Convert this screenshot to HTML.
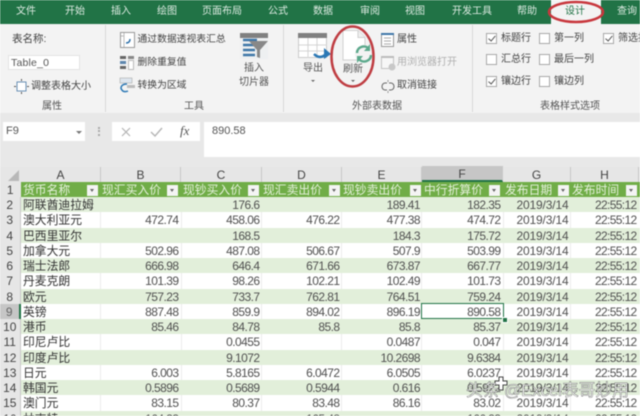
<!DOCTYPE html>
<html><head><meta charset="utf-8">
<style>
html,body{margin:0;padding:0;background:#fff}
#p{position:relative;width:640px;height:416px;overflow:hidden;background:#fff;font-family:"Liberation Sans","Noto Sans CJK SC",sans-serif;filter:blur(.45px)}
.a{position:absolute;white-space:nowrap}
.t{position:absolute;top:5px;height:14px;line-height:14px;font-size:10px;color:#dbe9e0;transform:translateX(-50%);white-space:nowrap}
.l{position:absolute;font-size:10px;line-height:14px;color:#444;white-space:nowrap}
.g{position:absolute;font-size:10px;line-height:14px;color:#555;white-space:nowrap;transform:translateX(-50%)}
.s{position:absolute;top:25px;width:1px;height:87px;background:#d8d8d8}
.cb{position:absolute;width:9px;height:9px;background:#fff;border:1px solid #a8a8a8}
.cb.on::after{content:"";position:absolute;left:3px;top:0;width:2.500px;height:6px;border:solid #555;border-width:0 1px 1px 0;transform:rotate(40deg)}
.ch{position:absolute;top:167px;height:15px;line-height:16px;background:#e6e6e6;font-size:12px;color:#444;text-align:center;border-right:1px solid #c8c8c8;box-sizing:border-box}
.r{position:absolute;left:0;width:640px;height:15.25px;line-height:17px;font-size:12px;letter-spacing:-.55px;color:#505050}
.r span{position:absolute;top:0;height:15.25px;text-align:right;box-sizing:border-box;white-space:nowrap;overflow:hidden}
.z{background:#e2efda}
.w{background:#fff}
.r .n{left:0;width:20.5px;background:#e6e6e6;text-align:center;border-right:1px solid #c8c8c8;font-size:12px;letter-spacing:0;color:#444}
.r .A{left:23px;width:77px;text-align:left;font-size:11.8px;letter-spacing:0;color:#333}
.r .B{left:100px;width:78.5px}
.r .C{left:180px;width:79.5px}
.r .D{left:261px;width:78.5px}
.r .E{left:341px;width:79px}
.r .F{left:421px;width:79.5px}
.r .G{left:503px;width:65.5px;letter-spacing:-.15px}
.r .H{left:570px;width:66.5px;letter-spacing:-.65px}
.w::after{content:"";position:absolute;left:100px;top:0;height:15.25px;width:1px;background:#ececec;box-shadow:81px 0 #ececec,161px 0 #ececec,241px 0 #ececec,321px 0 #ececec,403px 0 #ececec,470px 0 #ececec}
.h{position:absolute;top:182px;height:15px;line-height:17px;font-size:11.8px;color:#e6f1dd;background:#70ad47;white-space:nowrap;padding-left:2px;box-sizing:border-box;overflow:hidden}
.f{position:absolute;top:185px;width:11px;height:11px;background:#f4f4f4}
.f::after{content:"";position:absolute;left:3px;top:4px;border:2.500px solid transparent;border-top:3px solid #666;border-bottom:0}
</style></head><body>
<div id="p">
<div class="a" style="left:0;top:0;width:640px;height:24px;background:#217346"></div>
<div class="t" style="left:26px">文件</div><div class="t" style="left:75px">开始</div><div class="t" style="left:121px">插入</div><div class="t" style="left:167px">绘图</div><div class="t" style="left:222px">页面布局</div><div class="t" style="left:278px">公式</div><div class="t" style="left:323px">数据</div><div class="t" style="left:370px">审阅</div><div class="t" style="left:415px">视图</div><div class="t" style="left:472px">开发工具</div><div class="t" style="left:527px">帮助</div>
<div class="a" style="left:551px;top:0;width:50px;height:24px;background:#f3f3f3"></div>
<div class="t" style="left:575px;color:#217346">设计</div><div class="t" style="left:627px">查询</div>
<div class="a" style="left:0;top:24px;width:640px;height:89px;background:#f3f3f3"></div>
<div class="s" style="left:105px"></div><div class="s" style="left:283px"></div><div class="s" style="left:472px"></div>

<div class="l" style="left:12px;top:32px;font-size:10.5px">表名称:</div>
<div class="a" style="left:8px;top:55px;width:72px;height:15px;background:#fff;border:1px solid #e4e4e4;box-sizing:border-box;font-size:10.5px;line-height:14px;color:#555;padding-left:2px;letter-spacing:.2px">Table_0</div>
<svg class="a" style="left:13px;top:78px" width="17" height="17" viewBox="0 0 17 17"><rect x="4" y="4" width="9" height="9" fill="#fff" stroke="#6a8fb5"/><path d="M8.500 1v2M8.500 14v2M1 8.500h2M14 8.500h2" stroke="#555"/></svg>
<div class="l" style="left:31px;top:80px;font-size:10px">调整表格大小</div>
<div class="g" style="left:52px;top:100px">属性</div>

<svg class="a" style="left:120px;top:32px" width="15" height="16" viewBox="0 0 15 16"><rect x=".5" y=".5" width="14" height="15" fill="#fff" stroke="#9a9a9a"/><path d="M1 4h3M4 1v14" stroke="#bbb"/><path d="M6 11c3 0 4-2 4-4" fill="none" stroke="#2b6ea8" stroke-width="1.500"/></svg>
<div class="l" style="left:137.500px;top:33px;font-size:9.800px">通过数据透视表汇总</div>
<svg class="a" style="left:120px;top:56px" width="15" height="14" viewBox="0 0 15 14"><rect x="0" y="0" width="6" height="3" fill="#666"/><rect x="0" y="5" width="6" height="3" fill="#5c86ad"/><rect x="0" y="10" width="6" height="3" fill="#666"/><rect x="8" y="0" width="6" height="3" fill="#888"/><rect x="8.500" y="4.500" width="5" height="9" fill="#fff" stroke="#bbb"/></svg>
<div class="l" style="left:137.500px;top:56px;font-size:9.800px">删除重复值</div>
<svg class="a" style="left:119px;top:77px" width="17" height="17" viewBox="0 0 17 17"><rect x="1" y="1" width="12" height="5" fill="#dde5ee" stroke="#aaa" stroke-width=".6"/><rect x="8" y="8" width="8" height="3" fill="#bbb"/><path d="M8 7C2 7 1 11 3 13c1 2 4 2 6 1" fill="none" stroke="#2b78b5" stroke-width="1.500"/></svg>
<div class="l" style="left:137.500px;top:79px;font-size:9.800px">转换为区域</div>
<svg class="a" style="left:240px;top:33px" width="29" height="26" viewBox="0 0 29 26"><rect x="0" y="0" width="28" height="26" fill="#eef0f1"/><rect x="0" y="0" width="28" height="5" fill="#808080"/><path d="M3 7h14M3 12h12M3 17h12M3 22h12" stroke="#3f77a8" stroke-width="2.500"/><path d="M9 8h19l-8 9v8l-3-1v-7z" fill="#888"/></svg>
<div class="g" style="left:254px;top:62px">插入</div>
<div class="g" style="left:254px;top:76px">切片器</div>
<div class="g" style="left:194px;top:100px">工具</div>

<svg class="a" style="left:298px;top:33px" width="38" height="30" viewBox="0 0 38 30"><rect x=".5" y=".5" width="28" height="24" fill="#fff" stroke="#ccc"/><rect x="0" y="0" width="29" height="5" fill="#808080"/><path d="M10 5v20M19 5v20M1 12h28M1 18h28" stroke="#d4d4d4"/><path d="M16 21c4 4 8 4 12 0" fill="none" stroke="#2b78b5" stroke-width="2.500"/><path d="M26 15l7 6-7 5z" fill="#2b78b5"/></svg>
<div class="g" style="left:313px;top:62px">导出</div>
<div class="a" style="left:311px;top:80px;width:0;height:0;border:2px solid transparent;border-top:2px solid #666"></div>

<svg class="a" style="left:342px;top:30px" width="30" height="34" viewBox="0 0 30 34"><path d="M1 .5h15l7 7V30H1z" fill="#fff" stroke="#d0d0d0"/><path d="M16 .5v7h7" fill="#f0f0f0" stroke="#d0d0d0"/><circle cx="22" cy="24" r="9" fill="#f3f3f3"/><path d="M15 23c0-6 8-9 12-4" fill="none" stroke="#5ca98c" stroke-width="2.500"/><path d="M28 14v7h-6z" fill="#5ca98c"/><path d="M29 25c0 6-8 9-12 4" fill="none" stroke="#5ca98c" stroke-width="2.500"/><path d="M15 33v-7h6z" fill="#5ca98c"/></svg>
<div class="g" style="left:353px;top:63px">刷新</div>
<div class="a" style="left:351px;top:80px;width:0;height:0;border:2px solid transparent;border-top:2px solid #666"></div>

<svg class="a" style="left:381px;top:33px" width="13" height="14" viewBox="0 0 13 14"><rect x=".5" y=".5" width="12" height="13" fill="#fff" stroke="#999"/><rect x="0" y="0" width="13" height="2" fill="#3f77a8"/><path d="M3 5h7M3 8h7M3 11h7" stroke="#aaa"/></svg>
<div class="l" style="left:397px;top:33px">属性</div>
<svg class="a" style="left:381px;top:56px" width="15" height="15" viewBox="0 0 15 15"><rect x=".5" y=".5" width="12" height="12" fill="#f7f7f7" stroke="#c4c4c4"/><rect x="0" y="0" width="13" height="2" fill="#bbb"/><circle cx="11" cy="11" r="3.500" fill="#c8c8c8"/></svg>
<div class="l" style="left:397px;top:56px;color:#b0b0b0">用浏览器打开</div>
<svg class="a" style="left:381px;top:80px" width="14" height="13" viewBox="0 0 14 13"><path d="M6 3H4C2 3 1 5 1 6.500S2 10 4 10h2M8 3h2c2 0 3 2 3 3.500S12 10 10 10H8" fill="none" stroke="#666"/><path d="M7 0v2M7 11v2" stroke="#999"/></svg>
<div class="l" style="left:397px;top:79px">取消链接</div>
<div class="g" style="left:377px;top:100px">外部表数据</div>

<div class="cb on" style="left:486px;top:33px"></div><div class="l" style="left:501px;top:32px">标题行</div>
<div class="cb" style="left:539px;top:33px"></div><div class="l" style="left:554px;top:32px">第一列</div>
<div class="cb on" style="left:603px;top:33px"></div><div class="l" style="left:618px;top:32px">筛选按钮</div>
<div class="cb" style="left:486px;top:54px"></div><div class="l" style="left:501px;top:53px">汇总行</div>
<div class="cb" style="left:539px;top:54px"></div><div class="l" style="left:554px;top:53px">最后一列</div>
<div class="cb on" style="left:486px;top:76px"></div><div class="l" style="left:501px;top:75px">镶边行</div>
<div class="cb" style="left:539px;top:76px"></div><div class="l" style="left:554px;top:75px">镶边列</div>
<div class="g" style="left:570px;top:100px">表格样式选项</div>

<div class="a" style="left:0;top:113px;width:640px;height:54px;background:#e8e8e8"></div>
<div class="a" style="left:3px;top:122px;width:82px;height:19px;background:#fff;font-size:11px;line-height:18px;color:#555;padding-left:3px;box-sizing:border-box">F9</div>
<div class="a" style="left:76px;top:131px;width:0;height:0;border:3px solid transparent;border-top:3px solid #777"></div>
<div class="a" style="left:98px;top:127px;width:2px;height:9px;border-left:2px dotted #aaa"></div>
<div class="a" style="left:112px;top:122px;width:88px;height:19px;background:#fff"></div>
<svg class="a" style="left:120px;top:126px" width="12" height="12" viewBox="0 0 12 12"><path d="M2 2l8 8M10 2l-8 8" stroke="#b5b5b5" stroke-width="1.200"/></svg>
<svg class="a" style="left:150px;top:126px" width="13" height="12" viewBox="0 0 13 12"><path d="M1 6l4 4 7-8" fill="none" stroke="#b5b5b5" stroke-width="1.400"/></svg>
<div class="a" style="left:180px;top:122px;font:italic 13px/18px 'Liberation Serif',serif;color:#555">fx</div>
<div class="a" style="left:204px;top:122px;width:436px;height:35px;background:#fff;font-size:11px;line-height:18px;color:#555;padding-left:8px;box-sizing:border-box">890.58</div>

<div class="a" style="left:0;top:167px;width:21px;height:15px;background:#e6e6e6"></div>
<div class="a" style="left:8px;top:170px;width:0;height:0;border-left:11px solid transparent;border-bottom:11px solid #b8b8b8"></div>
<div class="ch" style="left:21px;width:80px">A</div><div class="ch" style="left:101px;width:80px">B</div><div class="ch" style="left:181px;width:81px">C</div><div class="ch" style="left:262px;width:80px">D</div><div class="ch" style="left:342px;width:80px">E</div>
<div class="ch" style="left:422px;width:81px;background:#c6c6c6;border-bottom:2px solid #217346;line-height:17px;top:166px;height:16px">F</div>
<div class="ch" style="left:503px;width:68px">G</div><div class="ch" style="left:571px;width:68px">H</div><div class="ch" style="left:639px;width:1px;border:0"></div>

<div class="a" style="left:0;top:182px;width:640px;height:15px;background:#70ad47"></div>
<div class="a" style="left:0;top:182px;width:20.5px;height:15px;background:#e6e6e6;border-right:1px solid #c8c8c8;font-size:12px;line-height:17px;text-align:center;color:#444">1</div>
<div class="h" style="left:21px;width:66px">货币名称</div><div class="f" style="left:87px"></div>
<div class="h" style="left:100px;width:67px">现汇买入价</div><div class="f" style="left:167px"></div>
<div class="h" style="left:181px;width:67px">现钞买入价</div><div class="f" style="left:248px"></div>
<div class="h" style="left:261px;width:68px">现汇卖出价</div><div class="f" style="left:329px"></div>
<div class="h" style="left:341px;width:69px">现钞卖出价</div><div class="f" style="left:410px"></div>
<div class="h" style="left:422px;width:70px">中行折算价</div><div class="f" style="left:489px"></div>
<div class="h" style="left:503px;width:56px">发布日期</div><div class="f" style="left:558px"></div>
<div class="h" style="left:570px;width:56px">发布时间</div><div class="f" style="left:626px"></div>

<div class="r z" style="top:197px"><span class="n">2</span><span class="A">阿联酋迪拉姆</span><span class="C">176.6</span><span class="E">189.41</span><span class="F">182.35</span><span class="G">2019/3/14</span><span class="H">22:55:12</span></div>
<div class="r w" style="top:212.25px"><span class="n">3</span><span class="A">澳大利亚元</span><span class="B">472.74</span><span class="C">458.06</span><span class="D">476.22</span><span class="E">477.38</span><span class="F">474.72</span><span class="G">2019/3/14</span><span class="H">22:55:12</span></div>
<div class="r z" style="top:227.5px"><span class="n">4</span><span class="A">巴西里亚尔</span><span class="C">168.5</span><span class="E">184.3</span><span class="F">175.72</span><span class="G">2019/3/14</span><span class="H">22:55:12</span></div>
<div class="r w" style="top:242.75px"><span class="n">5</span><span class="A">加拿大元</span><span class="B">502.96</span><span class="C">487.08</span><span class="D">506.67</span><span class="E">507.9</span><span class="F">503.99</span><span class="G">2019/3/14</span><span class="H">22:55:12</span></div>
<div class="r z" style="top:258px"><span class="n">6</span><span class="A">瑞士法郎</span><span class="B">666.98</span><span class="C">646.4</span><span class="D">671.66</span><span class="E">673.87</span><span class="F">667.77</span><span class="G">2019/3/14</span><span class="H">22:55:12</span></div>
<div class="r w" style="top:273.25px"><span class="n">7</span><span class="A">丹麦克朗</span><span class="B">101.39</span><span class="C">98.26</span><span class="D">102.21</span><span class="E">102.49</span><span class="F">101.73</span><span class="G">2019/3/14</span><span class="H">22:55:12</span></div>
<div class="r z" style="top:288.5px"><span class="n">8</span><span class="A">欧元</span><span class="B">757.23</span><span class="C">733.7</span><span class="D">762.81</span><span class="E">764.51</span><span class="F">759.24</span><span class="G">2019/3/14</span><span class="H">22:55:12</span></div>
<div class="r w" style="top:303.75px"><span class="n" style="background:#c6c6c6;border-right:2px solid #217346;color:#666">9</span><span class="A">英镑</span><span class="B">887.48</span><span class="C">859.9</span><span class="D">894.02</span><span class="E">896.19</span><span class="F">890.58</span><span class="G">2019/3/14</span><span class="H">22:55:12</span></div>
<div class="r z" style="top:319px"><span class="n">10</span><span class="A">港币</span><span class="B">85.46</span><span class="C">84.78</span><span class="D">85.8</span><span class="E">85.8</span><span class="F">85.37</span><span class="G">2019/3/14</span><span class="H">22:55:12</span></div>
<div class="r w" style="top:334.25px"><span class="n">11</span><span class="A">印尼卢比</span><span class="C">0.0455</span><span class="E">0.0487</span><span class="F">0.047</span><span class="G">2019/3/14</span><span class="H">22:55:12</span></div>
<div class="r z" style="top:349.5px"><span class="n">12</span><span class="A">印度卢比</span><span class="C">9.1072</span><span class="E">10.2698</span><span class="F">9.6384</span><span class="G">2019/3/14</span><span class="H">22:55:12</span></div>
<div class="r w" style="top:364.75px"><span class="n">13</span><span class="A">日元</span><span class="B">6.003</span><span class="C">5.8165</span><span class="D">6.0472</span><span class="E">6.0505</span><span class="F">6.0237</span><span class="G">2019/3/14</span><span class="H">22:55:12</span></div>
<div class="r z" style="top:380px"><span class="n">14</span><span class="A">韩国元</span><span class="B">0.5896</span><span class="C">0.5689</span><span class="D">0.5944</span><span class="E">0.616</span><span class="F">0.5922</span><span class="G">2019/3/14</span><span class="H">22:55:12</span></div>
<div class="r w" style="top:395.25px"><span class="n">15</span><span class="A">澳门元</span><span class="B">83.15</span><span class="C">80.37</span><span class="D">83.48</span><span class="E">86.16</span><span class="F">83.02</span><span class="G">2019/3/14</span><span class="H">22:55:12</span></div>
<div class="r z" style="top:410.5px"><span class="n">16</span><span class="A">林吉特</span><span class="B">164.33</span><span class="D">165.48</span><span class="F">166.33</span><span class="G">2019/3/14</span><span class="H">22:55:12</span></div>

<div class="a" style="left:421px;top:303px;width:83px;height:16px;border:1.500px solid #217346;box-sizing:border-box"></div>
<div class="a" style="left:501.500px;top:317px;width:4px;height:4px;background:#217346;border:.5px solid #fff"></div>

<svg class="a" style="left:0;top:0" width="640" height="416" viewBox="0 0 640 416"><ellipse cx="576" cy="12" rx="27" ry="10" fill="none" stroke="#c8373d" stroke-width="2.500"/><ellipse cx="352.500" cy="56.500" rx="21" ry="30" fill="none" stroke="#bf3d42" stroke-width="2.500"/></svg>

<svg class="a" style="left:494px;top:376px" width="14" height="15" viewBox="0 0 14 15"><path d="M5 1h4v4h4v4H9v5H5V9H1V5h4z" fill="#fff" stroke="#444"/></svg>
<div class="a" style="left:466px;top:381px;font-size:17px;line-height:20px;color:rgba(255,255,255,.9);-webkit-text-stroke:.35px #444;letter-spacing:-.2px">头条 @Excel表哥妙用</div>
</div>
</body></html>
